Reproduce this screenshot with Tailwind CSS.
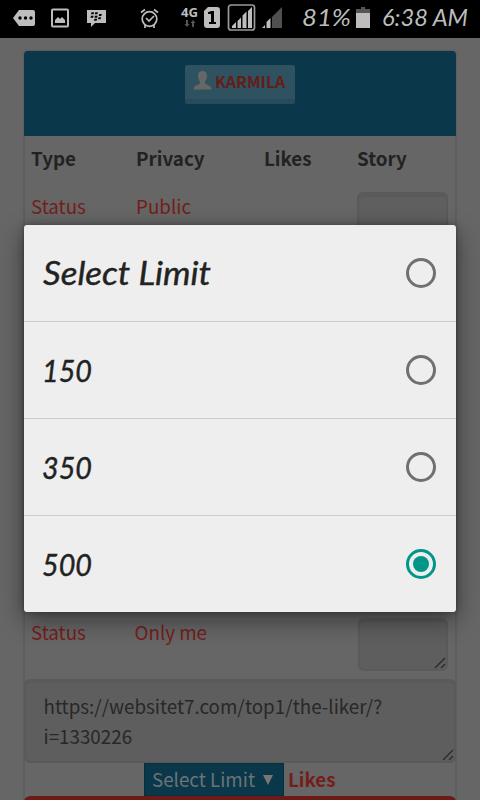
<!DOCTYPE html>
<html lang="en"><head><meta charset="utf-8"><title>Select Limit</title>
<script src="https://cdn.jsdelivr.net/npm/@tailwindcss/browser@4"></script></head>
<body class="relative flex h-[800px] w-[480px] flex-col overflow-hidden bg-[#666] font-['Noto_Sans_CJK_SC',sans-serif] text-[18.8px] leading-[30px] text-[#222]">
<header class="relative z-20 flex h-[38px] shrink-0 items-center bg-black text-[#bdbdbd]">
<svg class="h-[38px] w-[300px] shrink-0" viewBox="0 0 300 38" fill="#bdbdbd">
<path d="M19 10h14q2 0 2 2v12q0 2-2 2H19l-6-8z"/><g fill="#000"><circle cx="20" cy="18" r="1.7"/><circle cx="25.500" cy="18" r="1.7"/><circle cx="31" cy="18" r="1.7"/></g>
<rect x="52" y="9.500" width="16" height="17" rx="1" fill="none" stroke="#bdbdbd" stroke-width="2"/><path d="M55 23v-3l3-3 2 2 2-2 3 3v3z"/>
<path d="M87 10h19v13H95l-4 4v-4h-4z"/><g fill="#000"><path d="M91.500 12.200h2.600l-.5 2H91zM95.300 12.200h2.600l-.5 2h-2.600zM91 15.700h2.600l-.5 2h-2.600zM95 15.700h2.600l-.5 2H94.500zM99.200 14h2.600l-.5 2h-2.600zM94.500 18.700h2.600l-.5 2H94zM98.500 17.300h2.600l-.5 2H98z"/></g>
<g fill="none" stroke="#bdbdbd" stroke-width="1.700"><circle cx="149.500" cy="19" r="7.300"/><path d="m146 18 3 3 5-5M141 12.500l4-3M154 9.500l4 3M145 25v3M154 25v3"/></g>
<text x="181" y="16.500" font-family="Open Sans" font-weight="700" font-size="13" textLength="17" lengthAdjust="spacingAndGlyphs">4G</text>
<path fill="#555" d="M186 20h2v4h1.500l-2.500 3-2.500-3h1.500zM192 27h2v-4h1.500L193 20l-2.500 3h1.500z"/>
<path d="M208 7h9q3 0 3 3v15q0 3-3 3h-10q-3 0-3-3V11z"/><path fill="#000" d="M211 11h3v11h2v2h-7v-2h2v-8h-3v-2q2 0 3-1z"/>
<rect x="228.500" y="5" width="26" height="25" rx="2.500" fill="none" stroke="#999" stroke-width="1.700"/>
<path d="M232 28v-2l4-4v6zM237.500 28v-7l3.500-3.500V28zM242.500 28V15.500l4-4V28zM248 28V11l4-4v21zM262 28l3-3v3zM266.500 28v-6l4-4v10z"/><path fill="#505050" d="M272 28V17L282 7v21z"/>
</svg>
<svg class="h-[38px] w-[180px] shrink-0" viewBox="300 0 180 38" fill="#bdbdbd"><g font-family="Lato" font-style="italic" font-size="24"><text x="302" y="26" textLength="49" lengthAdjust="spacingAndGlyphs">81%</text><text x="382" y="26" textLength="86" lengthAdjust="spacingAndGlyphs">6:38 AM</text></g>
<path fill="#555" d="M356 9h5V7h4v2h5v5h-14z"/><path d="M356 13h14v15h-14z"/></svg>
</header>
<main class="mx-6 mt-[13px] h-[780px] rounded-t border-x border-[#5d5d5d] shadow-[0_0_2px_rgba(0,0,0,.3)]">
<div class="-mx-px flex h-[85px] justify-center rounded-t bg-[#0a384a] pt-[14px]">
<div class="flex h-[39px] w-[110px] items-start gap-[4px] rounded-[2px] border-b-[5px] border-[#274b5c] bg-[#2f5260] pl-[8px] pt-[3px]">
<svg class="mt-[3px] h-[19px] w-[19px] shrink-0" viewBox="0 0 19 19" fill="#666"><path d="M9.500 0C6 0 4.800 2.500 5 5.500c.1 2 .8 3.900 2 5v1.700C6.300 13.500.5 14 .5 18.500h18c0-4.500-5.800-5-6.500-6.300v-1.700c1.200-1.100 1.900-3 2-5C14.200 2.500 13 0 9.500 0z"/></svg>
<b class="-ml-px text-[16px] leading-[27px] text-[#651c19]">KARMILA</b></div></div>
<div class="grid h-[56px] grid-cols-[105px_128px_93px_1fr] pl-[6px] pt-[7px] font-bold"><span>Type</span><span>Privacy</span><span>Likes</span><span>Story</span></div>
<div class="grid h-[426px] grid-cols-[105px_221px_91px] pl-[6px] text-[#741e1b]"><span class="-mt-px">Status</span><span class="-mt-px">Public</span><div class="h-[54px] rounded-md border-2 border-t-[5px] border-[#5a5a5a] bg-[#5f5f5f]"></div></div>
<div class="grid h-[61px] grid-cols-[103.5px_223.500px_90px] pl-[6px] text-[#741e1b]"><span class="-mt-px">Status</span><span class="-mt-px">Only me</span>
<div class="flex h-[53px] items-end justify-end rounded-md border-2 border-t-[4px] border-[#5a5a5a] bg-[#5e5e5e]"><svg class="h-3 w-3" viewBox="0 0 12 12" stroke="#292929" stroke-width="1.300"><path d="M1 11 11 1M7 11l4-4"/></svg></div></div>
<div class="-mx-px flex h-[84px] items-end justify-between rounded-md border-2 border-t-[4px] border-[#5a5a5a] bg-[#5e5e5e] pl-[17.5px]"><p class="mb-[10px] text-[#282828]">https://websitet7.com/top1/the-liker/?<br>i=1330226</p><svg class="h-3 w-3" viewBox="0 0 12 12" stroke="#292929" stroke-width="1.300"><path d="M1 11 11 1M7 11l4-4"/></svg></div>
<div class="flex h-[33px] items-stretch pl-[119px]"><div class="flex w-[140px] items-center justify-between border border-[#082f3e] bg-[#0a384a] pl-[7px] pr-[10px] text-[#6b7376]"><span class="-mt-[2px]">Select Limit</span><svg class="h-[10px] w-[10px]" viewBox="0 0 10 10" fill="#777"><path d="M0 0h10L5 10z"/></svg></div><b class="ml-[4px] leading-[31px] text-[#741e1b]">Likes</b></div>
<div class="-mx-px h-10 rounded-t-md bg-[#6d1b17]"></div>
</main>
<section class="absolute left-6 top-[225px] z-10 grid h-[387px] w-[432px] grid-rows-[97px_97px_97px_96px] rounded-[3px] bg-[#eee] shadow-[0_8px_24px_rgba(0,0,0,.45),0_0_6px_rgba(0,0,0,.3)]">
<div class="flex items-center justify-between border-b border-[#ccc] pl-[16px] pr-5"><svg class="h-[60px] w-[190px]" viewBox="0 0 190 60" fill="#222" stroke="#222" stroke-width=".4"><text x="3" y="42" font-family="Lato" font-style="italic" font-size="32" textLength="168" lengthAdjust="spacingAndGlyphs">Select Limit</text></svg><i class="h-[30px] w-[30px] rounded-full border-[3px] border-[#707070]"></i></div>
<div class="flex items-center justify-between border-b border-[#ccc] pl-[16px] pr-5"><svg class="h-[60px] w-[100px]" viewBox="0 0 100 60" fill="#222" stroke="#222" stroke-width=".4"><text x="2" y="42" font-family="Lato" font-style="italic" font-size="30" textLength="50" lengthAdjust="spacingAndGlyphs">150</text></svg><i class="h-[30px] w-[30px] rounded-full border-[3px] border-[#707070]"></i></div>
<div class="flex items-center justify-between border-b border-[#ccc] pl-[16px] pr-5"><svg class="h-[60px] w-[100px]" viewBox="0 0 100 60" fill="#222" stroke="#222" stroke-width=".4"><text x="2" y="42" font-family="Lato" font-style="italic" font-size="30" textLength="50" lengthAdjust="spacingAndGlyphs">350</text></svg><i class="h-[30px] w-[30px] rounded-full border-[3px] border-[#707070]"></i></div>
<div class="flex items-center justify-between pl-[16px] pr-5"><svg class="h-[60px] w-[100px]" viewBox="0 0 100 60" fill="#222" stroke="#222" stroke-width=".4"><text x="2" y="42" font-family="Lato" font-style="italic" font-size="30" textLength="50" lengthAdjust="spacingAndGlyphs">500</text></svg><i class="flex h-[30px] w-[30px] items-center justify-center rounded-full border-[3px] border-[#009688]"><i class="h-4 w-4 rounded-full bg-[#009688]"></i></i></div>
</section>
</body></html>
